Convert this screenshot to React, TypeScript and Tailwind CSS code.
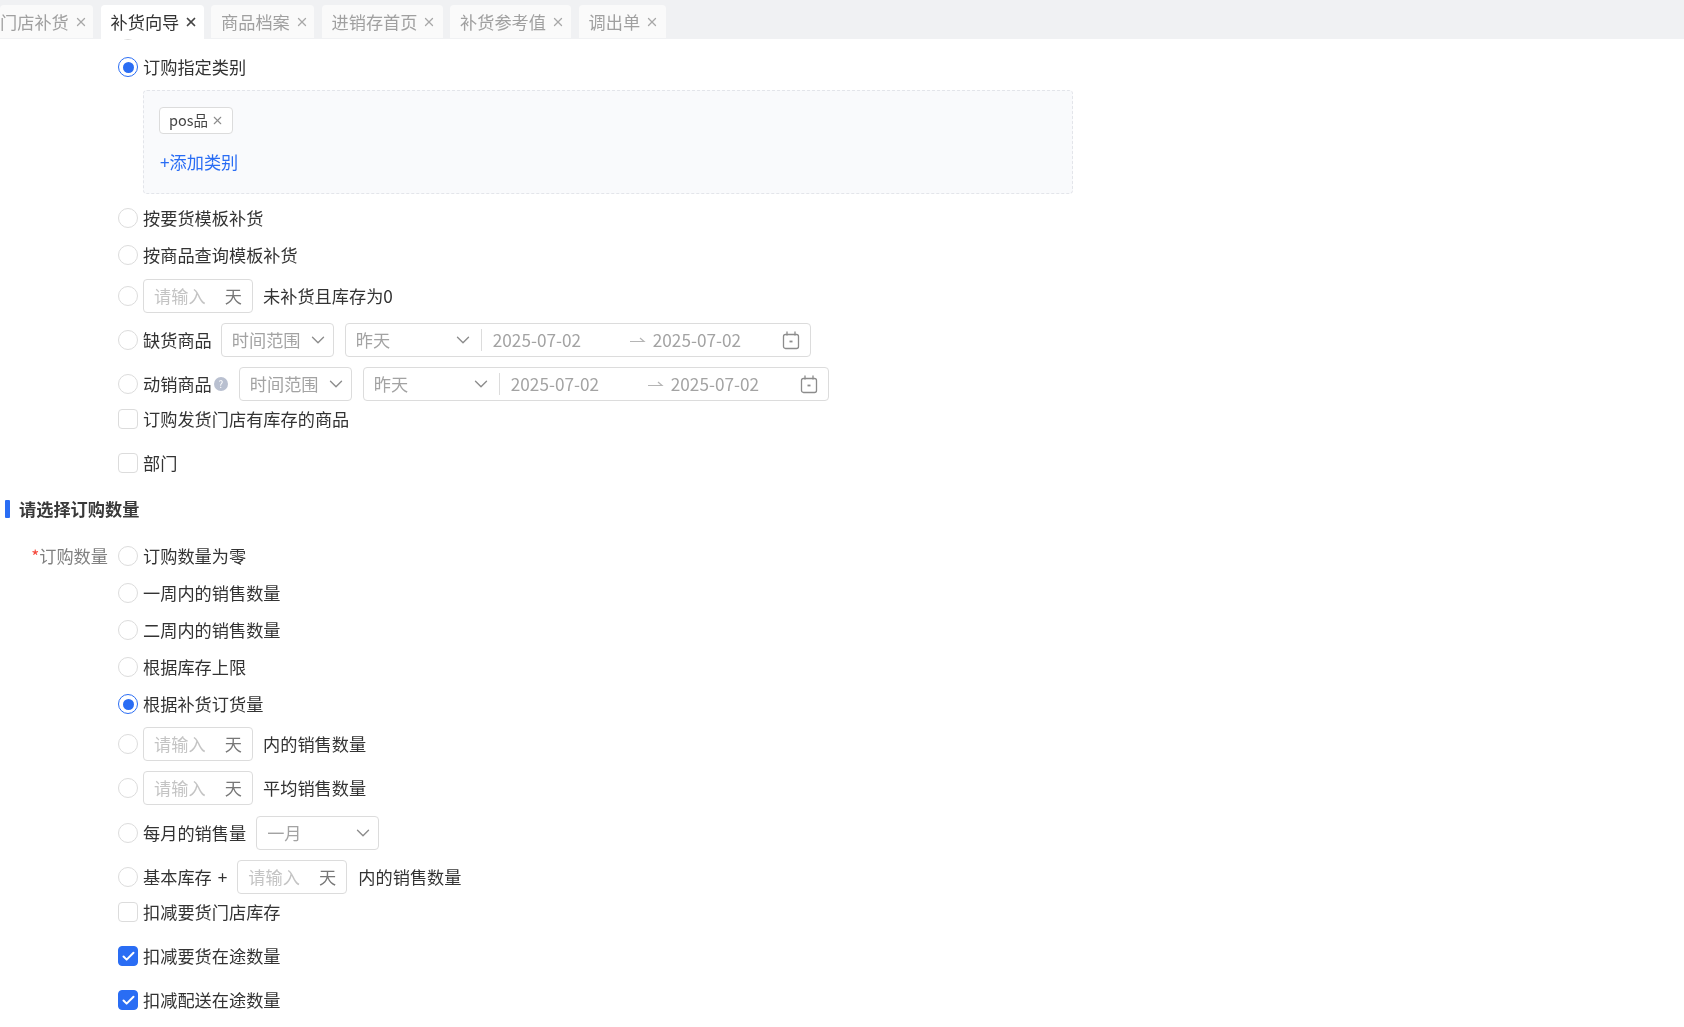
import React from 'react';
import { ChevronDown, X, Check } from 'lucide-react';

const FONT = '[font-family:"Noto_Sans_CJK_SC","Noto_Sans",sans-serif]';

const tabs = [
  { name: '门店补货', w: 'w-[93px]', pl: 'pl-0' },
  { name: '补货向导', w: 'w-[103px]', pl: 'pl-[10px]', active: true },
  { name: '商品档案', w: 'w-[103px]', pl: 'pl-[10px]' },
  { name: '进销存首页', w: 'w-[121px]', pl: 'pl-[10px]' },
  { name: '补货参考值', w: 'w-[121px]', pl: 'pl-[10px]' },
  { name: '调出单', w: 'w-[87px]', pl: 'pl-[10px]' },
];

const Radio: React.FC<{ checked?: boolean }> = ({ checked }) => (
  <span
    className={`flex h-5 w-5 shrink-0 items-center justify-center rounded-full border bg-white ${
      checked ? 'border-[#2a6df4]' : 'border-[#dcdcdc]'
    }`}
  >
    {checked && <span className="h-[11px] w-[11px] rounded-full bg-[#2a6df4]" />}
  </span>
);

const Checkbox: React.FC<{ checked?: boolean }> = ({ checked }) => (
  <span
    className={`flex h-5 w-5 shrink-0 items-center justify-center rounded-[4px] border ${
      checked ? 'border-[#2a6df4] bg-[#2a6df4]' : 'border-[#dcdcdc] bg-white'
    }`}
  >
    {checked && <Check size={15} strokeWidth={3.2} className="text-white" />}
  </span>
);

const DaysInput = () => (
  <span className="flex h-[34px] w-[110px] shrink-0 items-center justify-between rounded-[4px] border border-[#dcdcdc] pl-[10px] pr-[10px] bg-white">
    <span className="text-[#c4c4c4]">请输入</span>
    <span className="text-[#777]">天</span>
  </span>
);

const Select: React.FC<{ label: string; className: string }> = ({ label, className }) => (
  <span
    className={`flex h-[34px] shrink-0 items-center justify-between rounded-[4px] border border-[#dcdcdc] pl-[10px] pr-[4px] bg-white text-[#a3a3a3] ${className}`}
  >
    {label}
    <ChevronDown size={22} strokeWidth={1.5} className="text-[#8c8c8c]" />
  </span>
);

const CalendarIcon = () => (
  <svg width="18" height="19" viewBox="0 0 18 19" fill="none" stroke="#8c8c8c" strokeWidth="1.3">
    <rect x="1.5" y="3.5" width="15" height="14" rx="2" />
    <path d="M5 .5v4M13 .5v4" />
    <path d="M7.5 10.5h3" strokeWidth="1.8" />
  </svg>
);

const DateRange = () => (
  <span className="flex h-[34px] w-[466px] shrink-0 items-center rounded-[4px] border border-[#dcdcdc] bg-white pl-[10px] text-[#a3a3a3]">
    <span className="w-[96px]">昨天</span>
    <ChevronDown size={22} strokeWidth={1.5} className="text-[#8c8c8c]" />
    <span className="ml-[7px] h-[22px] w-px bg-[#dcdcdc]" />
    <span className="ml-[11px] w-[136px]">2025-07-02</span>
    <svg width="17" height="8" viewBox="0 0 17 8" fill="none" stroke="#b5b5b5" strokeWidth="1.2">
      <path d="M1 5.5h14L11 2" />
    </svg>
    <span className="ml-[7px] w-[129px]">2025-07-02</span>
    <CalendarIcon />
  </span>
);

const Row: React.FC<{ className?: string; children: React.ReactNode }> = ({ className, children }) => (
  <div className={`flex h-[34px] items-center ${className ?? ''}`}>{children}</div>
);

const RadioRow: React.FC<{ className?: string; checked?: boolean; children?: React.ReactNode }> = ({
  className,
  checked,
  children,
}) => (
  <Row className={className}>
    <Radio checked={checked} />
    <span className="ml-[5px] flex items-center">{children}</span>
  </Row>
);

const CheckRow: React.FC<{ className?: string; checked?: boolean; label: string }> = ({ className, checked, label }) => (
  <Row className={className}>
    <Checkbox checked={checked} />
    <span className="ml-[5px]">{label}</span>
  </Row>
);

export default function App() {
  return (
    <div className={`h-[1027px] w-[1684px] overflow-hidden bg-white text-[17.2px] leading-none text-[#333] blur-[0.4px] ${FONT}`}>
      {/* tab bar */}
      <div className="flex h-[39px] items-start gap-[7.5px] bg-[#f0f1f3] pt-[5px]">
        {tabs.map((t) => (
          <div
            key={t.name}
            className={`flex items-center gap-[5px] rounded-t-[4px] ${t.w} ${t.pl} ${
              t.active ? 'h-[34px] bg-white text-[#333]' : 'h-[33px] bg-[#fafafa] text-[#a0a0a0]'
            }`}
          >
            <span className="whitespace-nowrap">{t.name}</span>
            <X size={14} strokeWidth={t.active ? 3 : 2.2} className={t.active ? 'text-[#444]' : 'text-[#a8a8a8]'} />
          </div>
        ))}
      </div>

      <div className="h-[988px] overflow-hidden">
        {/* replenish scope */}
        <div className="pl-[118px]">
          <RadioRow className="-mt-[26px]" />
          <RadioRow className="mt-[3px]" checked>
            订购指定类别
          </RadioRow>

          <div className="ml-[25px] mt-[6px] flex h-[104px] w-[930px] flex-col items-start rounded-[4px] border border-dashed border-[#e3e5ea] bg-[#f9fafc] pl-[16px] pt-[16px]">
            <span className="-ml-px flex h-[27px] w-[74px] items-center gap-[3px] rounded-[4px] border border-[#dcdcdc] bg-white pl-[9px] text-[14.5px] text-[#444]">
              pos品
              <X size={13} className="text-[#8c8c8c]" />
            </span>
            <span className="mt-[19px] text-[#2a6df4]">+添加类别</span>
          </div>

          <RadioRow className="mt-[7px]">按要货模板补货</RadioRow>
          <RadioRow className="mt-[3px]">按商品查询模板补货</RadioRow>
          <RadioRow className="mt-[7px]">
            <DaysInput />
            <span className="ml-[10px]">未补货且库存为0</span>
          </RadioRow>
          <RadioRow className="mt-[10px]">
            缺货商品
            <Select label="时间范围" className="ml-[9px] w-[113px]" />
            <span className="ml-[11px]">
              <DateRange />
            </span>
          </RadioRow>
          <RadioRow className="mt-[10px]">
            动销商品
            <span className="ml-[2px] flex h-[14px] w-[14px] items-center justify-center rounded-full bg-[#b9c0d0] text-[10px] text-white">
              ?
            </span>
            <Select label="时间范围" className="ml-[11px] w-[113px]" />
            <span className="ml-[11px]">
              <DateRange />
            </span>
          </RadioRow>
          <CheckRow className="mt-[1px]" label="订购发货门店有库存的商品" />
          <CheckRow className="mt-[10px]" label="部门" />
        </div>

        {/* section title */}
        <div className="mt-[12px] flex h-[34px] items-center pl-[5px]">
          <span className="h-[18px] w-[5px] rounded-[1px] bg-[#2a6df4]" />
          <span className="ml-[9px] font-semibold text-[#3a3a3a]">请选择订购数量</span>
        </div>

        {/* order quantity */}
        <div className="mt-[13px] flex">
          <div className="flex h-[34px] w-[118px] shrink-0 items-center justify-end pr-[10px] text-[#808080]">
            <span className="text-[#f5483b]">*</span>订购数量
          </div>
          <div>
            <RadioRow>订购数量为零</RadioRow>
            <RadioRow className="mt-[3px]">一周内的销售数量</RadioRow>
            <RadioRow className="mt-[3px]">二周内的销售数量</RadioRow>
            <RadioRow className="mt-[3px]">根据库存上限</RadioRow>
            <RadioRow className="mt-[3px]" checked>
              根据补货订货量
            </RadioRow>
            <RadioRow className="mt-[6px]">
              <DaysInput />
              <span className="ml-[10px]">内的销售数量</span>
            </RadioRow>
            <RadioRow className="mt-[10px]">
              <DaysInput />
              <span className="ml-[10px]">平均销售数量</span>
            </RadioRow>
            <RadioRow className="mt-[11px]">
              每月的销售量
              <Select label="一月" className="ml-[10px] w-[123px]" />
            </RadioRow>
            <RadioRow className="mt-[10px]">
              基本库存<span className="ml-[6px]">+</span>
              <span className="ml-[10px]">
                <DaysInput />
              </span>
              <span className="ml-[11px]">内的销售数量</span>
            </RadioRow>
            <CheckRow className="mt-[1px]" label="扣减要货门店库存" />
            <CheckRow className="mt-[10px]" checked label="扣减要货在途数量" />
            <CheckRow className="mt-[10px]" checked label="扣减配送在途数量" />
          </div>
        </div>
      </div>
    </div>
  );
}
